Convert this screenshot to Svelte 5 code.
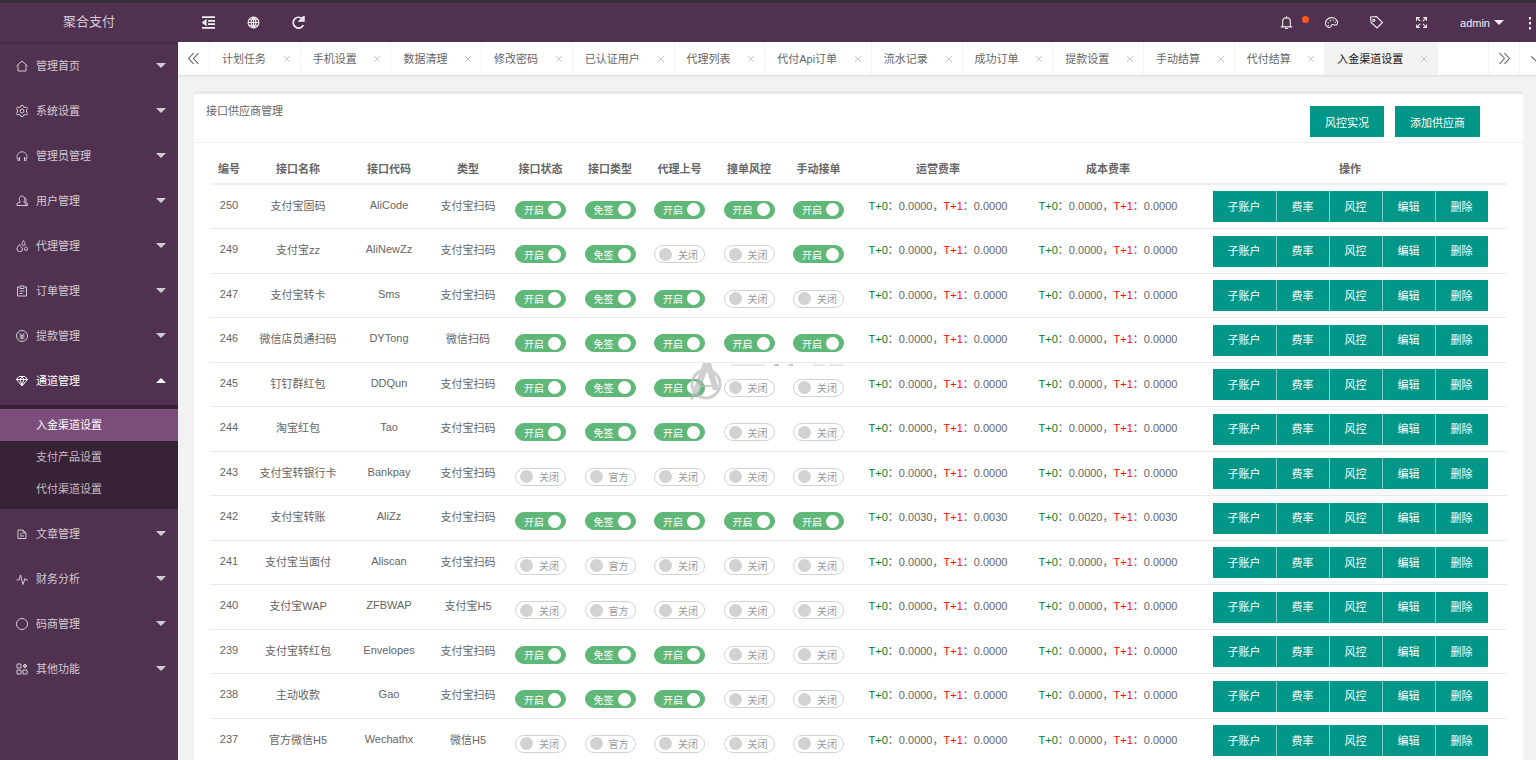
<script lang="ts">
	type Channel = {
		id: number;
		name: string;
		code: string;
		type: string;
		flags: number[];
		run: string[];
		cost: string[];
	};

	const zero = ['0.0000', '0.0000'];

	function row(id: number, name: string, code: string, type: string, flags: number[], run = zero, cost = zero): Channel {
		return { id, name, code, type, flags, run, cost };
	}

	let channels = $state([
		row(250, '支付宝固码', 'AliCode', '支付宝扫码', [1, 1, 1, 1, 1]),
		row(249, '支付宝zz', 'AliNewZz', '支付宝扫码', [1, 1, 0, 0, 1]),
		row(247, '支付宝转卡', 'Sms', '支付宝扫码', [1, 1, 1, 0, 0]),
		row(246, '微信店员通扫码', 'DYTong', '微信扫码', [1, 1, 1, 1, 1]),
		row(245, '钉钉群红包', 'DDQun', '支付宝扫码', [1, 1, 1, 0, 0]),
		row(244, '淘宝红包', 'Tao', '支付宝扫码', [1, 1, 1, 0, 0]),
		row(243, '支付宝转银行卡', 'Bankpay', '支付宝扫码', [0, 0, 0, 0, 0]),
		row(242, '支付宝转账', 'AliZz', '支付宝扫码', [1, 1, 1, 1, 1], ['0.0030', '0.0030'], ['0.0020', '0.0030']),
		row(241, '支付宝当面付', 'Aliscan', '支付宝扫码', [0, 0, 0, 0, 0]),
		row(240, '支付宝WAP', 'ZFBWAP', '支付宝H5', [0, 0, 0, 0, 0]),
		row(239, '支付宝转红包', 'Envelopes', '支付宝扫码', [1, 1, 1, 0, 0]),
		row(238, '主动收款', 'Gao', '支付宝扫码', [1, 1, 1, 0, 0]),
		row(237, '官方微信H5', 'Wechathx', '微信H5', [0, 0, 0, 0, 0])
	]);

	const flagNames = ['接口状态', '接口类型', '代理上号', '撞单风控', '手动接单'];
	const columns = ['编号', '接口名称', '接口代码', '类型', ...flagNames, '运营费率', '成本费率', '操作'];
	const widths = [38, 100, 82, 76, 69, 70, 69, 70, 69, 170, 170];
	const actions = ['子账户', '费率', '风控', '编辑', '删除'];

	let tabs = ['计划任务', '手机设置', '数据清理', '修改密码', '已认证用户', '代理列表', '代付Api订单', '流水记录', '成功订单', '提款设置', '手动结算', '代付结算', '入金渠道设置'];
	let activeTab = $state('入金渠道设置');
	let opened = $state('通道管理');

	// 24x24 outlines
	const icons: { [key: string]: string } = {
		home: 'M1 12L12 2l11 10M4 10v12h16V10',
		gear: 'M10 1h4l1 3 3 1 3-1 2 3-2 3v4l2 3-2 3-3-1-3 1-1 3h-4l-1-3-3-1-3 1-2-3 2-3v-4L1 7l2-3 3 1 3-1zM16 12a4 4 0 1 1-8 0a4 4 0 1 1 8 0',
		headset: 'M3 18a10 10 0 1 1 18 0M7 14v7H4v-5M17 14v7h3v-5',
		user: 'M9 14c-3-2-4-12 3-12s6 10 3 12l5 3v4H2v-4zM17 5c4 1 4 6 2 9l4 3v4h-3',
		drops: 'M7 9c-3 4-5 6-5 9a5 5 0 0 0 11 0c0-3-3-5-6-9zM15 1c-2 3-3 5-3 7a3 3 0 0 0 6 0c0-2-1-4-3-7zM20 13c-2 2-3 4-3 5a3 3 0 0 0 6 0c0-1-1-3-3-5z',
		form: 'M7 4H3v18h18V4h-4M8 2h8v5H8zM7 12h10M7 17h6',
		yen: 'M23 12a11 11 0 1 1-22 0a11 11 0 1 1 22 0M7 6l5 6 5-6M7 12h10M7 16h10M12 12v7',
		diamond: 'M6 3h12l5 6-11 13L1 9zM1 9h22M8 9l4 11 4-11M8 9l4-5 4 5',
		file: 'M4 4h10l6 6v11H4zM14 4v6h6M8 12h4M8 16h8',
		pulse: 'M1 14h5l3-10 5 19 4-12 2 3h4',
		circle: 'M23 12a11 11 0 1 1-22 0a11 11 0 1 1 22 0',
		app: 'M2 2h8v8H2zM2 14h8v8H2zM14 14h8v8h-8zM18 2l4 4-4 4-4-4zM18 4v4M16 6h4',
		outdent: 'M0 2h24M11 9h13M11 15h13M0 22h24M7 8l-5 4 5 4z',
		globe: 'M22 12a10 10 0 1 1-20 0a10 10 0 1 1 20 0M2 12h20M4 7h16M4 17h16M12 2v20M12 2c-6 5-6 15 0 20M12 2c6 5 6 15 0 20',
		refresh: 'M21 17a10 10 0 1 1-1-11M22 1v8h-8z',
		bell: 'M2 20h20M5 20V10c0-9 14-9 14 0v10M10 23h4M12 1v3',
		palette: 'M11 3C5 4 0 9 1 15c1 6 8 8 10 4 1-3 2-4 5-3 8 3 9-5 5-9-2-3-6-5-10-4zM6 12v1M10 8v1M15 7v1M19 11v1M6 17v1',
		tag: 'M1 2l11-1 11 11-10 10L2 12zM9 8a2 2 0 1 1-4 0a2 2 0 1 1 4 0',
		expand: 'M9 9L3 3M3 8V3h5M15 9l6-6M16 3h5v5M9 15l-6 6M3 16v5h5M15 15l6 6M21 16v5h-5',
		more: 'M12 2v1M12 12v1M12 22v1',
		prev: 'M12 2L3 12l9 10M21 2l-9 10 9 10',
		next: 'M3 2l9 10-9 10M12 2l9 10-9 10',
		down: 'M2 8l10 9 10-9'
	};

	const menu = [
		{ title: '管理首页', icon: 'home' },
		{ title: '系统设置', icon: 'gear' },
		{ title: '管理员管理', icon: 'headset' },
		{ title: '用户管理', icon: 'user' },
		{ title: '代理管理', icon: 'drops' },
		{ title: '订单管理', icon: 'form' },
		{ title: '提款管理', icon: 'yen' },
		{ title: '通道管理', icon: 'diamond', children: ['入金渠道设置', '支付产品设置', '代付渠道设置'] },
		{ title: '文章管理', icon: 'file' },
		{ title: '财务分析', icon: 'pulse' },
		{ title: '码商管理', icon: 'circle' },
		{ title: '其他功能', icon: 'app' }
	];

	function flagText(index: number, on: number) {
		if (index === 1) return on ? '免签' : '官方';
		return on ? '开启' : '关闭';
	}
</script>

{#snippet icon(name: string)}
	<svg class="icon {name}" viewBox="0 0 24 24" aria-hidden="true"><path d={icons[name]} /></svg>
{/snippet}

{#snippet rate(values: string[])}
	<span class="t0">T+0</span>：{values[0]}，<span class="t1">T+1</span>：{values[1]}
{/snippet}

<div class="layout">
	<aside>
		<div class="logo">聚合支付</div>
		<nav>
			{#each menu as item}
				<button class="item" class:open={opened === item.title} onclick={() => (opened = opened === item.title ? '' : item.title)}>
					{@render icon(item.icon)}
					<span>{item.title}</span>
					<i class="caret"></i>
				</button>
				{#if item.children && opened === item.title}
					<div class="submenu">
						{#each item.children as child}
							<a href="#channel" class:active={child === '入金渠道设置'}>{child}</a>
						{/each}
					</div>
				{/if}
			{/each}
		</nav>
	</aside>

	<div class="main">
		<header>
			<button class="tool" aria-label="收起菜单">{@render icon('outdent')}</button>
			<button class="tool" aria-label="网站">{@render icon('globe')}</button>
			<button class="tool" aria-label="刷新">{@render icon('refresh')}</button>
			<div class="space"></div>
			<button class="tool" aria-label="消息">{@render icon('bell')}<i class="dot"></i></button>
			<button class="tool" aria-label="主题">{@render icon('palette')}</button>
			<button class="tool" aria-label="便签">{@render icon('tag')}</button>
			<button class="tool" aria-label="全屏">{@render icon('expand')}</button>
			<button class="admin">admin<i class="caret"></i></button>
			<button class="more-btn" aria-label="更多">{@render icon('more')}</button>
		</header>

		<div class="tabs">
			<button class="step" aria-label="向左">{@render icon('prev')}</button>
			<div class="tab-list">
				{#each tabs as tab}
					<div class="tab" class:current={tab === activeTab}>
						<button class="tab-title" onclick={() => (activeTab = tab)}>{tab}</button>
						<button class="close" aria-label="关闭{tab}"><svg viewBox="0 0 8 8"><path d="M1 1l6 6M7 1L1 7" /></svg></button>
					</div>
				{/each}
			</div>
			<button class="step right" aria-label="向右">{@render icon('next')}</button>
			<button class="step last" aria-label="标签操作">{@render icon('down')}</button>
		</div>

		<div class="content">
			<section class="card">
				<div class="card-header">
					<span>接口供应商管理</span>
					<div class="card-buttons">
						<button class="btn">风控实况</button>
						<button class="btn">添加供应商</button>
					</div>
				</div>
				<div class="card-body">
					<table>
						<colgroup>
							{#each widths as width}
								<col style="width: {width}px" />
							{/each}
							<col />
						</colgroup>
						<thead>
							<tr>
								{#each columns as column}
									<th>{column}</th>
								{/each}
							</tr>
						</thead>
						<tbody>
							{#each channels as channel}
								<tr>
									<td>{channel.id}</td>
									<td>{channel.name}</td>
									<td>{channel.code}</td>
									<td>{channel.type}</td>
									{#each channel.flags as flag, i}
										<td>
											<label class="switch" class:on={flag}>
												<input type="checkbox" aria-label={flagNames[i]} checked={!!flag} onchange={() => (channel.flags[i] = flag ? 0 : 1)} />
												<span>{flagText(i, flag)}</span>
												<i></i>
											</label>
										</td>
									{/each}
									<td>{@render rate(channel.run)}</td>
									<td>{@render rate(channel.cost)}</td>
									<td>
										<div class="btn-group">
											{#each actions as action}
												<button class="btn">{action}</button>
											{/each}
										</div>
									</td>
								</tr>
							{/each}
						</tbody>
					</table>
				</div>
			</section>
		</div>

		<svg class="watermark" viewBox="0 0 156 38" aria-hidden="true">
			<circle cx="16" cy="21" r="14" fill="none" stroke="#bbb" stroke-width="3" />
			<path d="M13 0h8l8 27h-6l-6-19-8 22-7 7-2-1z" fill="#bbb" />
			<path d="M9 23h15" stroke="#bbb" stroke-width="2" />
			<path d="M41 2h34M97 2h6M123 2h12M139 2h15" stroke="#ddd" stroke-width="2" />
			<path d="M84 2h5M100 2h3" stroke="#aaa" stroke-width="2" />
		</svg>
	</div>
</div>

<style>
	:global(body) {
		margin: 0;
		background: #f2f2f2;
	}
	.layout {
		display: flex;
		height: 100vh;
		box-sizing: border-box;
		border-top: 3px solid #333336;
		overflow: hidden;
		font-family: "Liberation Sans", "Noto Sans CJK SC", sans-serif;
		font-size: 11px;
		color: #666;
	}
	button {
		border: 0;
		padding: 0;
		background: none;
		font: inherit;
		color: inherit;
		cursor: pointer;
		white-space: nowrap;
	}
	.icon {
		width: 12px;
		height: 12px;
		flex: none;
		fill: none;
		stroke: currentColor;
		stroke-width: 2;
	}
	.caret {
		border: 5px solid transparent;
		border-top-color: currentColor;
		border-bottom: 0;
	}

	/* sidebar */
	aside {
		width: 178px;
		flex: none;
		background: #50314f;
		color: #d3cbd3;
	}
	.logo {
		height: 39px;
		line-height: 37px;
		text-align: center;
		font-size: 13px;
		box-shadow: 0 1px 2px rgba(0, 0, 0, 0.2);
		margin-bottom: 1px;
	}
	.item {
		display: flex;
		align-items: center;
		gap: 8px;
		width: 100%;
		height: 45px;
		padding: 0 12px 0 16px;
	}
	.item span {
		flex: 1;
		padding-bottom: 2px;
		text-align: left;
	}
	.item.open {
		color: #fff;
	}
	.item.open .caret {
		transform: rotate(180deg);
	}
	.submenu {
		margin: 2px 0;
		padding: 4px 0;
		background: #382237;
	}
	.submenu a {
		display: block;
		height: 32px;
		line-height: 32px;
		padding-left: 36px;
		color: #c3bdc3;
		text-decoration: none;
	}
	.submenu a.active {
		background: #7a4d7b;
		color: #fff;
	}

	/* top bar */
	.main {
		position: relative;
		flex: 1;
		min-width: 0;
		display: flex;
		flex-direction: column;
	}
	header {
		display: flex;
		flex: none;
		height: 39px;
		padding-left: 8px;
		background: #50314f;
		color: #f4f0f4;
	}
	.space {
		flex: 1;
	}
	.tool {
		position: relative;
		display: flex;
		align-items: center;
		justify-content: center;
		width: 45px;
	}
	.tool .icon {
		width: 13px;
		height: 13px;
		stroke-linecap: round;
	}
	.tool .outdent,
	.tool .refresh {
		stroke-width: 3;
		stroke-linecap: butt;
	}
	.dot {
		position: absolute;
		top: 13px;
		right: 0;
		width: 7px;
		height: 7px;
		border-radius: 50%;
		background: #ff5722;
	}
	.admin {
		display: flex;
		align-items: center;
		gap: 4px;
		padding: 0 16px;
	}
	.more-btn {
		display: flex;
		align-items: center;
		width: 16px;
		padding-left: 4px;
	}
	.more-btn .icon {
		stroke-width: 4;
		stroke-linecap: square;
		overflow: visible;
	}

	.tabs {
		display: flex;
		flex: none;
		height: 33px;
		background: #fff;
		box-shadow: 0 1px 2px rgba(0, 0, 0, 0.1);
	}
	.step {
		flex: none;
		width: 32px;
		border-right: 1px solid #f3f3f3;
		display: flex;
		align-items: center;
		justify-content: center;
	}
	.step .icon {
		width: 13px;
		height: 13px;
	}
	.step.right {
		margin-left: auto;
		border-left: 1px solid #f3f3f3;
	}
	.step.last {
		width: 16px;
		justify-content: flex-start;
		padding-left: 10px;
		overflow: hidden;
		border: 0;
	}
	.tab-list {
		display: flex;
		flex: 1;
		max-width: 1228px;
		min-width: 0;
		overflow: hidden;
	}
	.tab {
		display: flex;
		flex: 1 0 auto;
		align-items: center;
		justify-content: space-between;
		gap: 15px;
		padding: 0 9px 0 12px;
		border-right: 1px solid #f3f3f3;
	}
	.tab-title {
		padding-bottom: 2px;
	}
	.tab.current {
		background: #f3f3f3;
		color: #111;
	}
	.close {
		display: flex;
		color: #c6c6c6;
	}
	.close svg {
		width: 8px;
		height: 8px;
		stroke: currentColor;
	}

	/* content */
	.content {
		flex: 1;
		min-height: 0;
		display: flex;
		flex-direction: column;
		padding: 16px 13px 0 16px;
		overflow-y: auto;
		scrollbar-width: none;
	}
	.card {
		flex: 1 0 auto;
		background: #fff;
		border-top: 3px solid #e6e8eb;
	}
	.card-header {
		display: flex;
		justify-content: space-between;
		height: 48px;
		padding: 0 43px 0 12px;
		line-height: 35px;
		border-bottom: 1px solid #f0f0f0;
	}
	.card-buttons {
		display: flex;
		align-items: center;
		gap: 11px;
		padding-top: 6px;
	}
	.btn {
		height: 31px;
		padding: 0 15px 2px;
		background: #009688;
		color: #fff;
	}
	.card-body {
		padding: 12px 16px;
	}
	table {
		width: 100%;
		table-layout: fixed;
		border-collapse: separate;
		border-spacing: 0;
		text-align: center;
	}
	th, td {
		box-sizing: border-box;
		padding: 0 0 4px;
		white-space: nowrap;
		border-bottom: 1px solid #e9ebeb;
	}
	th {
		height: 30px;
		padding-bottom: 2px;
		border-bottom: 2px solid #f0f0f0;
	}
	td {
		height: 44px;
	}
	tr:nth-child(even) td {
		height: 45px;
	}
	.t0 {
		color: #008020;
	}
	.t1 {
		color: #f00;
	}
	.btn-group {
		display: flex;
		justify-content: center;
		margin-top: 4px;
	}
	.btn-group .btn + .btn {
		border-left: 1px solid rgba(255, 255, 255, 0.5);
	}
	.switch {
		position: relative;
		display: flex;
		flex-direction: row-reverse;
		align-items: center;
		justify-content: space-between;
		box-sizing: border-box;
		width: 51px;
		height: 18px;
		margin: 10px auto 0;
		padding: 0 6px 0 4px;
		border: 1px solid #d2d2d2;
		border-radius: 9px;
		font-size: 10px;
		color: #999;
		cursor: pointer;
	}
	.switch input {
		position: absolute;
		inset: 0;
		margin: 0;
		opacity: 0;
	}
	.switch i {
		width: 13px;
		height: 13px;
		border-radius: 50%;
		background: #d2d2d2;
	}
	.switch.on {
		flex-direction: row;
		padding: 0 4px 0 8px;
		border-color: #5fb878;
		background: #5fb878;
		color: #fff;
	}
	.switch.on i {
		background: #fff;
	}

	.watermark {
		position: absolute;
		top: 360px;
		left: 512px;
		width: 156px;
		height: 38px;
		opacity: 0.7;
		pointer-events: none;
	}
</style>
